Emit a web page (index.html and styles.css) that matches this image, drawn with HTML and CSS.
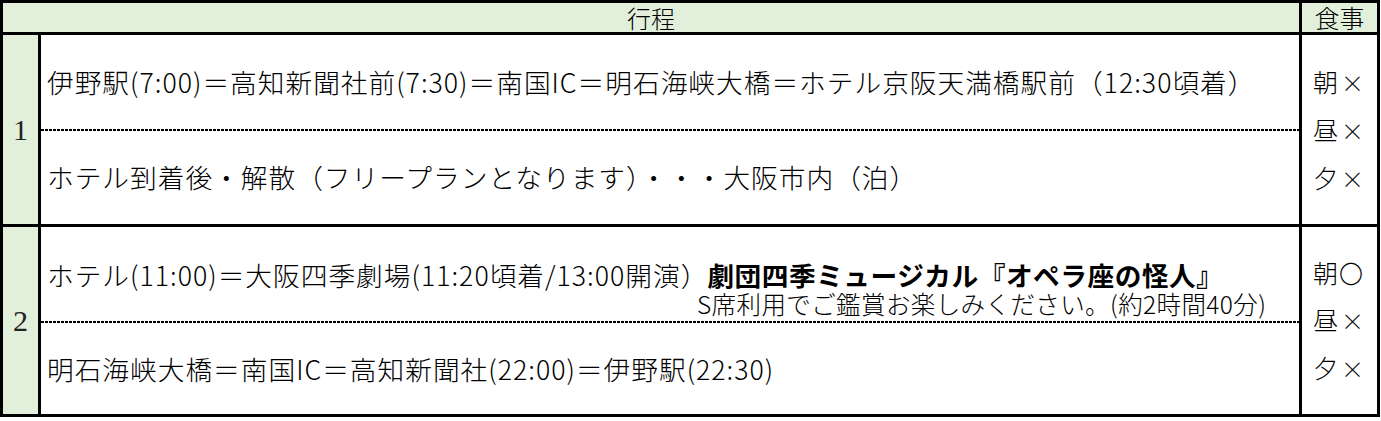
FILE: index.html
```html
<!DOCTYPE html>
<html lang="ja">
<head>
<meta charset="utf-8">
<title>行程表</title>
<link rel="stylesheet" href="styles.css">
</head>
<body>
<div class="sheet">
  <div class="hdr hdr-main">行程</div>
  <div class="hdr hdr-meal">食事</div>

  <div class="day">1</div>
  <div class="plan">
    <div class="half">
      <div class="line">伊野駅(7:00)＝高知新聞社前(7:30)＝南国IC＝明石海峡大橋＝ホテル京阪天満橋駅前（12:30頃着）</div>
    </div>
    <div class="half dotted">
      <div class="line">ホテル到着後・解散（フリープランとなります）・・・大阪市内（泊）</div>
    </div>
  </div>
  <div class="meal">
    <div class="meal-line">朝<span class="mark">×</span></div>
    <div class="meal-line">昼<span class="mark">×</span></div>
    <div class="meal-line">夕<span class="mark">×</span></div>
  </div>

  <div class="day">2</div>
  <div class="plan">
    <div class="half half-bottom">
      <div class="line">ホテル(11:00)＝大阪四季劇場(11:20頃着/13:00開演）<strong class="show">劇団四季ミュージカル『オペラ座の怪人』</strong></div>
      <div class="line sub">S席利用でご鑑賞お楽しみください。(約2時間40分)</div>
    </div>
    <div class="half dotted">
      <div class="line">明石海峡大橋＝南国IC＝高知新聞社(22:00)＝伊野駅(22:30)</div>
    </div>
  </div>
  <div class="meal">
    <div class="meal-line">朝<span class="mark circle">〇</span></div>
    <div class="meal-line">昼<span class="mark">×</span></div>
    <div class="meal-line">夕<span class="mark">×</span></div>
  </div>
</div>
</body>
</html>
```

FILE: styles.css
```css
html, body {
  margin: 0;
  padding: 0;
  background: #fff;
}

body {
  font-family: "Noto Sans CJK JP", "Noto Sans", sans-serif;
  font-weight: 300;
  color: #000;
}

.sheet {
  display: grid;
  grid-template-columns: 35px 1258px 75px;
  grid-template-rows: 29px 189px 187px;
  gap: 3px;
  padding: 3px;
  background: #000;
  width: max-content;
}

.hdr {
  background: #e2efda;
  display: flex;
  align-items: center;
  justify-content: center;
  font-size: 24px;
  line-height: 1;
}

.hdr-main {
  grid-column: span 2;
}

.hdr-meal {
  font-size: 25px;
}

.day {
  background: #e2efda;
  display: flex;
  align-items: center;
  justify-content: center;
  font-family: "Liberation Serif", "Noto Serif CJK JP", serif;
  font-size: 30px;
  font-weight: 400;
  color: #222;
}

.plan {
  background: #fff;
  display: flex;
  flex-direction: column;
}

.half {
  flex: 1;
  display: flex;
  flex-direction: column;
  justify-content: center;
  padding-left: 6px;
}

.half.dotted {
  background-image: repeating-linear-gradient(90deg, #000 0 3px, transparent 3px 4px);
  background-size: 100% 2px;
  background-repeat: no-repeat;
  background-position: top left;
  padding-top: 2px;
}

.half-bottom {
  justify-content: flex-end;
  padding-bottom: 3px;
}

.line {
  font-size: 26.7px;
  letter-spacing: 1px;
  line-height: 30px;
  white-space: nowrap;
}

.show {
  font-weight: 700;
  margin-left: -1px;
  letter-spacing: 0.5px;
}

.sub {
  font-size: 24.5px;
  letter-spacing: 0.4px;
  line-height: 28px;
  padding-left: 650px;
}

.meal {
  background: #fff;
  display: flex;
  flex-direction: column;
  justify-content: center;
  padding-left: 11px;
}

.meal-line {
  font-size: 25px;
  line-height: 47px;
  white-space: nowrap;
}

.mark {
  margin-left: 3px;
  font-size: 23px;
}

.mark.circle {
  margin-left: 1px;
  font-size: 24px;
}
```
